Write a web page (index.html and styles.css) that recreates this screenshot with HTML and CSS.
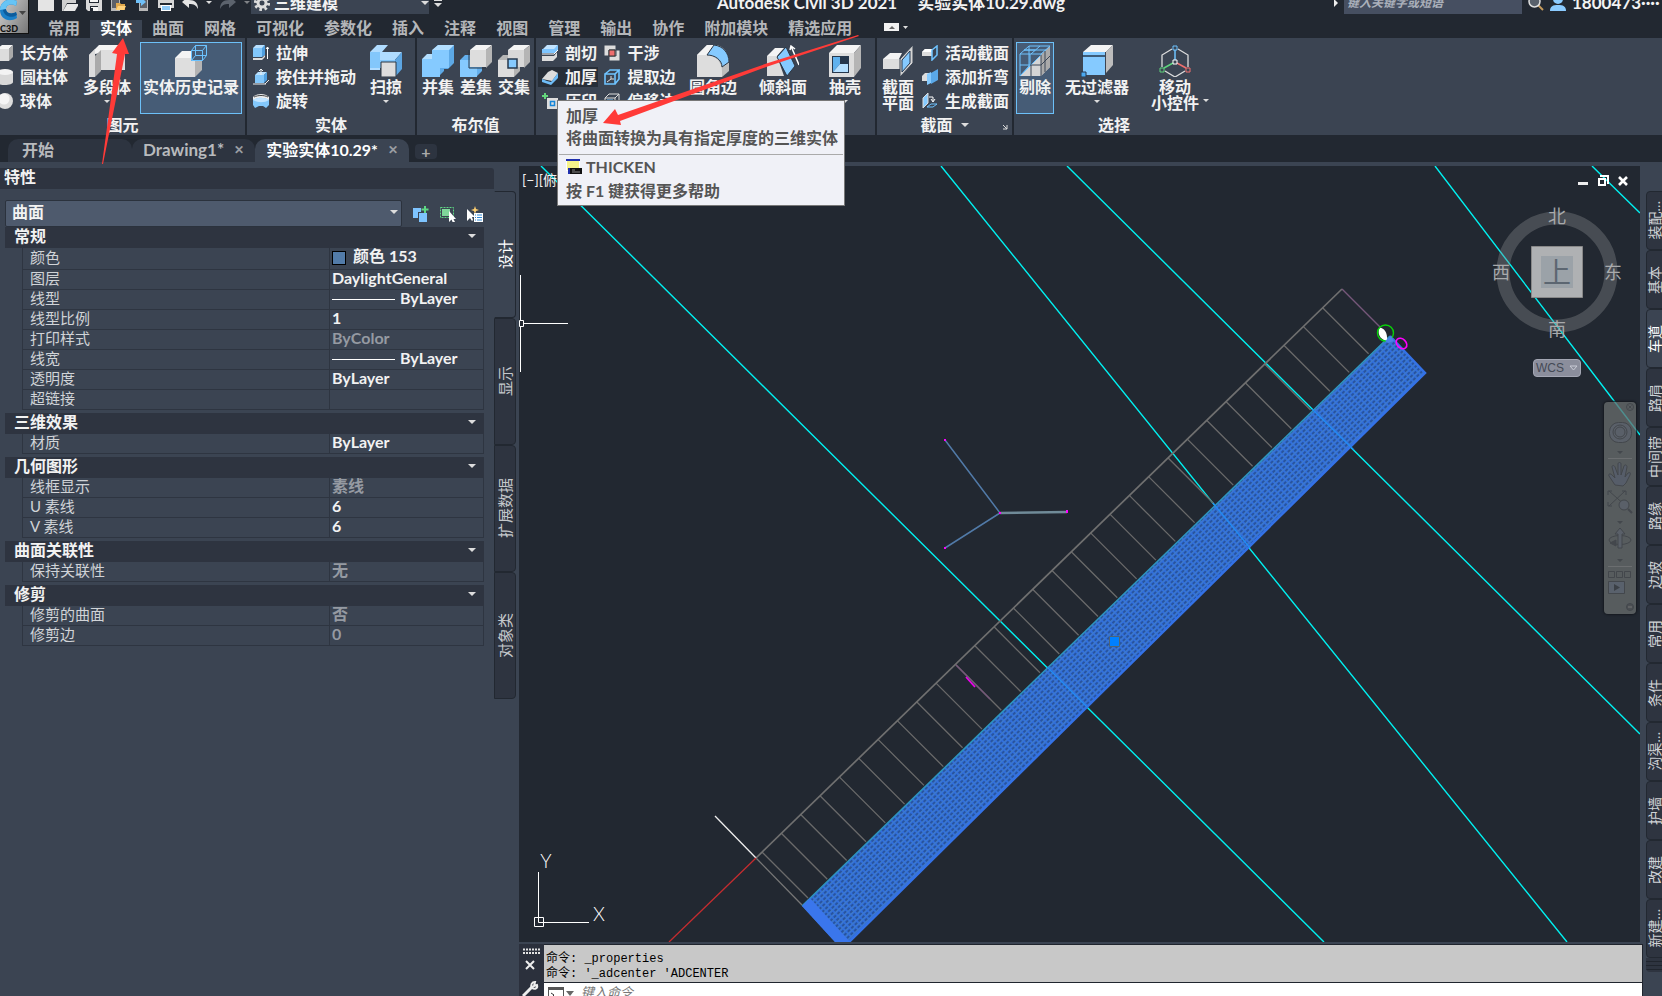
FILE: index.html
```html
<!DOCTYPE html>
<html lang="zh-CN">
<head>
<meta charset="utf-8">
<title>Autodesk Civil 3D 2021 - 实验实体10.29.dwg</title>
<link rel="stylesheet" href="styles.css">
</head>
<body>
<div class="app">
<header class="titlebar">
  <div class="quick">
    <button aria-label="新建"><svg width="16" height="16" viewBox="0 0 16 16"><path d="M0 0h10v5h6v11H0z" fill="#e4e4e4"/><path d="M11 0l5 4h-5z" fill="#aaa"/></svg></button>
    <button aria-label="打开"><svg width="16" height="16" viewBox="0 0 16 16"><path d="M0 16V3h6l2 2h6v3H5L1 16z" fill="#cfcfcf"/><path d="M5 9h12l-4 7H1z" fill="#e8e8e8"/></svg></button>
    <button aria-label="保存"><svg width="16" height="16" viewBox="0 0 16 16"><path d="M0 0h16v16H2L0 14z" fill="#d9d9d9"/><path d="M3 3h10v5H3zM4 11h8v5H4z" fill="#222831"/><path d="M4 3h8v4H4zM5 12h7v4H7v-3H5z" fill="#f5f5f5"/></svg></button>
    <button aria-label="从移动设备打开"><svg width="16" height="16" viewBox="0 0 16 16"><path d="M1 0h9v16H1z" fill="#b8b8b8"/><path d="M2 2h7v11H2z" fill="#5c6068"/><path d="M6 8h4l1 1h4v6H6z" fill="#e0a84c"/><path d="M8 11h8l-2 4H6z" fill="#ffd27a"/></svg></button>
    <button aria-label="保存到移动设备"><svg width="16" height="16" viewBox="0 0 16 16"><path d="M5 0h9v16H5z" fill="#b8b8b8"/><path d="M6 2h7v11H6z" fill="#5c6068"/><path d="M2 5h5V2l5 5-5 4V8H2z" fill="#6fc0f8"/></svg></button>
    <button aria-label="打印"><svg width="16" height="16" viewBox="0 0 16 16"><path d="M3 0h10v5H3z" fill="#fff"/><path d="M0 5h16v8H0z" fill="#d6d6d6"/><path d="M2 8h12v2H2z" fill="#222831"/><path d="M3 10h10v6H3z" fill="#fff"/><path d="M4 11h8v4H4z" fill="#8fcaf8"/></svg></button>
    <button aria-label="放弃"><svg width="16" height="16" viewBox="0 0 16 16"><path d="M7 1v4c6 0 9 3 9 9-2-4-4-5-9-5v4L0 7z" fill="#e4e4e4"/></svg></button>
    <i class="caret"></i>
    <button aria-label="重做"><svg width="16" height="16" viewBox="0 0 16 16"><path d="M9 1v4C3 5 0 8 0 14c2-4 4-5 9-5v4l7-6z" fill="#5c636d"/></svg></button>
    <i class="caret dim"></i>
  </div>
  <button class="workspace"><svg width="16" height="16" viewBox="0 0 16 16"><circle cx="8" cy="8" r="6.6" fill="none" stroke="#ddd" stroke-width="3" stroke-dasharray="2.6 2.58"/><circle cx="8" cy="8" r="4" fill="none" stroke="#ddd" stroke-width="3"/></svg><span>三维建模</span><i class="caret"></i></button>
  <button class="customize" aria-label="自定义"><i class="bar"></i><i class="caret"></i></button>
  <h1><span>Autodesk Civil 3D 2021</span><span>实验实体10.29.dwg</span></h1>
  <div class="account">
    <i class="play"></i>
    <input type="text" aria-label="搜索" placeholder="键入关键字或短语">
    <button aria-label="搜索"><svg width="16" height="16" viewBox="0 0 16 16"><path d="M10 10l5 5" stroke="#c59a5c" stroke-width="2"/><circle cx="6.500" cy="6.500" r="5.500" fill="#59616c" stroke="#e0e0e0" stroke-width="1.500"/></svg></button>
    <button aria-label="用户"><svg width="16" height="16" viewBox="0 0 16 16"><circle cx="8" cy="4" r="5" fill="#8bcbff"/><path d="M0 16c0-5 3-6 8-6s8 1 8 6z" fill="#8bcbff"/></svg></button>
    <span>1800473····</span>
  </div>
</header>
<button class="appbtn" aria-label="应用程序菜单"><svg width="29" height="26" viewBox="0 0 29 26"><path d="M17 1C8-3 0 2 0 10c0 9 9 13 17 8l-1-6c-5 3-10 1-10-3s5-6 10-3z" fill="#1a7fc8"/><path d="M17 1C8-3 0 2 0 10l6-1c0-4 5-6 10-3z" fill="#67c4f5"/><path d="M6 9c0 4 5 6 10 3l1 3c-6 4-13 1-14-5z" fill="#0c5c9c"/><path d="M19 11h7l-3.500 4z" fill="#444"/></svg><b>C3D</b></button>

<nav class="tabs">
  <button>常用</button><button class="on">实体</button><button>曲面</button><button>网格</button><button>可视化</button><button>参数化</button><button>插入</button><button>注释</button><button>视图</button><button>管理</button><button>输出</button><button>协作</button><button>附加模块</button><button>精选应用</button>
  <button class="mini" aria-label="最小化功能区"><svg width="26" height="9" viewBox="0 0 26 9"><path d="M0 0h15v8H0z" fill="#f2f2f2"/><path d="M5 6l3-3 3 3z" fill="#666"/><path d="M19 3h5l-2.500 3z" fill="#ddd"/></svg></button>
</nav>

<section class="ribbon">
  <div class="panel p-prim">
    <div class="body">
      <div class="col">
        <button><svg width="16" height="16" viewBox="0 0 16 16"><path d="M0 4l5-4h11l-4 4z" fill="#f5f5f5"/><path d="M0 4h12v12H0z" fill="#ddd"/><path d="M12 4l4-4v12l-4 4z" fill="#aaa"/></svg>长方体</button>
        <button><svg width="16" height="16" viewBox="0 0 16 16"><path d="M0 3v10c0 4 16 4 16 0V3z" fill="#d8d8d8"/><ellipse cx="8" cy="3" rx="8" ry="3" fill="#f3f3f3"/></svg>圆柱体</button>
        <button><svg width="16" height="16" viewBox="0 0 16 16"><circle cx="8" cy="8" r="8" fill="#ddd"/><circle cx="7" cy="6" r="5.500" fill="#f5f5f5"/></svg>球体</button>
      </div>
      <button class="big w60"><svg width="36" height="32" viewBox="0 0 36 32"><path d="M0 10L10 0h26v12L22 12v-4h-10z" fill="#f4f4f4"/><path d="M0 10l6-6v28H0z" fill="#dcdcdc"/><path d="M6 32V11l6-6v21z" fill="#aaa"/><path d="M12 5h24v20H12z" fill="#dedede"/></svg><span>多段体</span><i class="caret"></i></button>
      <button class="big sel w102"><svg width="32" height="32" viewBox="0 0 32 32"><path d="M0 13l7-7h20l-7 7z" fill="#f4f4f4"/><path d="M0 13h20v19H0z" fill="#dedede"/><path d="M20 13l7-7v19l-7 7z" fill="#b4b4b4"/><path d="M16 5h12v11H16z" fill="#465c76"/><path d="M16 5l4-5h12v11l-4 5" fill="#465c76"/><path d="M16.500 5.500h11v10h-11zM16.500 5.500l4-5h11l-4 5M31.500.500v10l-4 5M20.500.500v10h11M20.500 10.500l-4 5" fill="none" stroke="#6cc3ff"/></svg><span>实体历史记录</span></button>
    </div>
    <h2>图元</h2>
  </div>
  <div class="panel p-solid">
    <div class="body">
      <div class="col">
        <button><svg width="16" height="16" viewBox="0 0 16 16"><path d="M0 3l3-3h9l-2 3z" fill="#b8e0ff"/><path d="M0 3h9v9H0z" fill="#82c7fb"/><path d="M9 3l3-3v10l-3 2z" fill="#4f9fe0"/><path d="M0 13h9v2H0zM9 13l3-3v2l-3 3z" fill="#ddd"/><path d="M14.500 14V2M13 4l1.500-2L16 4" fill="none" stroke="#fff"/></svg>拉伸</button>
        <button><svg width="16" height="16" viewBox="0 0 16 16"><path d="M2 6l3-3h9l-3 3z" fill="#b8e0ff"/><path d="M2 6h9v8H2z" fill="#82c7fb"/><path d="M11 6l3-3v8l-3 3z" fill="#4f9fe0"/><path d="M8 6V0M6 2l2-2 2 2M0 15h13M12 15l4-4" fill="none" stroke="#eee"/></svg>按住并拖动</button>
        <button><svg width="16" height="16" viewBox="0 0 16 16"><path d="M0 4c4-4 12-4 16 0v3H0z" fill="#eee"/><path d="M1 4c4-2 10-2 14 0" stroke="#444" fill="none"/><path d="M0 7c5-3 11-3 16 0v5l-3 3-3-2H6l-4 2-2-3z" fill="#82c7fb"/><path d="M0 7c5-3 11-3 16 0-5 3-11 3-16 0z" fill="#c2e4ff"/></svg>旋转</button>
      </div>
      <button class="big w60"><svg width="32" height="32" viewBox="0 0 32 32"><path d="M0 7l7-7h11l-6 7h20l-8 9H10v9H0z" fill="#b0dcff"/><path d="M0 7h10v8h15v8H0z" fill="#83c7fb"/><path d="M25 15l7-8v17l-7 8z" fill="#5da6e2"/><path d="M11 17h15v15H11z" fill="#ddd" stroke="#2b3644"/></svg><span>扫掠</span><i class="caret"></i></button>
    </div>
    <h2>实体</h2>
  </div>
  <div class="panel p-bool">
    <div class="body">
      <button class="big w38"><svg width="32" height="32" viewBox="0 0 32 32"><path d="M0 15l6-6h5V5l5-5h16v18l-6 6h-4v2l-6 6H0z" fill="#5da9e6"/><path d="M0 14h10V5h17v18H18v9H0z" fill="#85caff"/><path d="M10 5l6-5h16l-5 5zM0 14l5-5h5v5z" fill="#b4dfff"/></svg><span>并集</span></button>
      <button class="big w38"><svg width="32" height="32" viewBox="0 0 32 32"><path d="M0 15l5-5h6v12h11v4l-6 6H0z" fill="#64b0ee"/><path d="M0 15h10v8h7v9H0z" fill="#85caff"/><path d="M10 5l6-5h16l-6 5z" fill="#f4f4f4"/><path d="M26 5l6-5v17l-6 6z" fill="#b5b5b5"/><path d="M10 5h16v17H10z" fill="#ddd"/><path d="M9 5v18h17" stroke="#2b3644" fill="none"/></svg><span>差集</span></button>
      <button class="big w38"><svg width="32" height="32" viewBox="0 0 32 32"><path d="M0 15l5-5h17v16l-6 6H0z" fill="#b5b5b5"/><path d="M0 15h16v17H0z" fill="#ddd"/><path d="M10 5l6-5h16l-6 5z" fill="#f4f4f4"/><path d="M26 5l6-5v17l-6 6z" fill="#b5b5b5"/><path d="M10 5h16v17H10z" fill="#d8d8d8"/><path d="M10 14h9v9h-9z" fill="#85caff" stroke="#26384d" stroke-width="1.500"/></svg><span>交集</span></button>
    </div>
    <h2>布尔值</h2>
  </div>
  <div class="panel p-edit">
    <div class="body">
      <div class="col">
        <button><svg width="16" height="16" viewBox="0 0 16 16"><path d="M1 4l4-4h11l-3 4z" fill="#c2e4ff"/><path d="M0 4h12l4-4v5l-3 3H0z" fill="#7fc6ff"/><path d="M0 9h12l4-4" stroke="#fff" fill="none"/><path d="M0 11h12l3-4v5l-4 4H0z" fill="#ddd"/></svg>剖切</button>
        <button class="hot"><svg width="16" height="16" viewBox="0 0 16 16"><path d="M0 10L6 3l4-2 6 3-6 8-5-1z" fill="#ddd"/><path d="M0 10l5 2 4 1 7-9v5l-7 7-9-3z" fill="#6fbdf8"/></svg>加厚</button>
        <button><svg width="16" height="16" viewBox="0 0 16 16"><path d="M3 0v6M0 3h6" stroke="#63d67c" stroke-width="2"/><path d="M5 5h11v11H5z" fill="#ddd"/><path d="M8.500 8.500h4v4h-4z" fill="none" stroke="#1686d9" stroke-width="1.500"/></svg>压印</button>
      </div>
      <div class="col">
        <button><svg width="16" height="16" viewBox="0 0 16 16"><path d="M0 0h12v11H0zM5 5h11v11H5z" fill="#ddd" stroke="#3b4452"/><path d="M5 5h6v6H5z" fill="#ee6e6e" stroke="#333"/></svg>干涉</button>
        <button><svg width="16" height="16" viewBox="0 0 16 16"><path d="M1 5h10v10H1zM1 5l5-4h9l-4 4M15 1v9l-4 5" fill="none" stroke="#6fc3ff" stroke-width="1.600"/><path d="M3 13l4-3V7M7 10h3" stroke="#ddd" fill="none"/></svg>提取边</button>
        <button><svg width="16" height="16" viewBox="0 0 16 16"><path d="M1 5h10v10H1zM1 5l4-4h10l-4 4M15 1v10l-4 4" fill="none" stroke="#ddd"/><path d="M3 7h6v6H3z" fill="none" stroke="#6fc3ff"/></svg>偏移边</button>
      </div>
      <button class="big w60 g"><svg width="32" height="32" viewBox="0 0 32 32"><path d="M0 10L10 0h8c8 0 14 8 14 17v9l-7 6H0z" fill="#bdbdbd"/><path d="M0 10L10 0h8l-8 10z" fill="#f4f4f4"/><path d="M0 32V10h10c9 0 15 8 15 16v6z" fill="#ddd"/><path d="M10 10l7-10c9 1 15 8 15 17l-7 5c0-7-7-12-15-12z" fill="#85caff" stroke="#2b3644"/></svg><span>圆角边</span><i class="caret"></i></button>
      <button class="big w60"><svg width="32" height="32" viewBox="0 0 32 32"><path d="M0 11l8-8h9l-7 8z" fill="#f4f4f4"/><path d="M0 11h10l7 20H0z" fill="#ddd"/><path d="M10 12l9-10 9 19-8 10z" fill="#85caff" stroke="#2b3644"/><path d="M32 20L24 1M23 5l1-4 4 3" stroke="#fff" fill="none" stroke-width="1.500"/></svg><span>倾斜面</span><i class="caret"></i></button>
      <button class="big w60"><svg width="32" height="32" viewBox="0 0 32 32"><path d="M0 8l8-8h24l-7 8z" fill="#f4f4f4"/><path d="M25 8l7-8v23l-7 9z" fill="#b5b5b5"/><path d="M0 8h25v24H0z" fill="#ddd"/><path d="M3 11h17v17H3z" fill="#26374c"/><path d="M4 12h7v7l-7 8z" fill="#5fb1ee"/><path d="M4 27l7-8h8v8z" fill="#b4dfff"/></svg><span>抽壳</span><i class="caret"></i></button>
    </div>
    <h2>实体编辑</h2>
  </div>
  <div class="panel p-sect">
    <div class="body">
      <button class="big w38"><svg width="32" height="32" viewBox="0 0 32 32"><path d="M1 14l7-6h12l-3 6z" fill="#f4f4f4"/><path d="M1 14h17v10H1z" fill="#ddd"/><path d="M18 14L31 0v18L18 32z" fill="#d4d4d4" stroke="#3b4452"/><path d="M20 15l8-9v12l-8 9z" fill="#85caff" stroke="#26374c"/></svg><span>截面<br>平面</span></button>
      <div class="col">
        <button><svg width="16" height="16" viewBox="0 0 16 16"><path d="M0 7l3-3h8v7H0z" fill="#ddd"/><path d="M0 7l3-3h8l-2 3z" fill="#fff"/><path d="M10 5l5-4v9l-5 5z" fill="#3b4452" stroke="#6fc3ff" stroke-width="1.500"/></svg>活动截面</button>
        <button><svg width="16" height="16" viewBox="0 0 16 16"><path d="M0 7l3-3h4v8H0z" fill="#ddd"/><path d="M5 5l4-2v11l-4 2z" fill="#85caff"/><path d="M9 4l7-4v11l-7 4z" fill="#5aa8e8"/></svg>添加折弯</button>
        <button><svg width="16" height="16" viewBox="0 0 16 16"><path d="M1 5l5-5v10l-5 5z" fill="#85caff" stroke="#ddd"/><path d="M7 4h4v4M9 6l2 3 2-3" fill="none" stroke="#fff"/><path d="M5 14l4-3h6l-4 3z" fill="none" stroke="#6fc3ff"/></svg>生成截面</button>
      </div>
    </div>
    <h2>截面<i class="caret"></i><button class="launch" aria-label="截面设置"><svg width="6" height="6" viewBox="0 0 6 6"><path d="M1 1l4 4M5 1v4H1" fill="none" stroke="#ddd"/></svg></button></h2>
  </div>
  <div class="panel p-pick">
    <div class="body">
      <button class="big sel w38"><svg width="32" height="32" viewBox="0 0 32 32"><path d="M1 31L22 10 31 1v21l-9 9z" fill="#d5d5d5"/><path d="M22 10l9-9v21l-9 9z" fill="#aaa"/><path d="M1 9h21v1L1 31zM1 9l9-8h21l-9 8M11 9v12M1 20h11M16 5L5 5M21 1l-9 8M10 1v20M10 21l-9 10M5 5h22" fill="none" stroke="#6fc3ff"/><path d="M12 20v11M11 20h11l9-9M22 10v21M26 6v21" fill="none" stroke="#3a4656"/></svg><span>剔除</span></button>
      <button class="big w70"><svg width="32" height="32" viewBox="0 0 32 32"><path d="M2 7l8-7h22l-7 7z" fill="#f4f4f4"/><path d="M25 7l7-7v20l-7 8z" fill="#bdbdbd"/><path d="M2 7h22v23H2z" fill="#85caff"/><path d="M1 11h23" stroke="#26374c" stroke-width="1.500"/><path d="M0 27h5v5H0z" fill="#4ba8ee" stroke="#26374c"/></svg><span>无过滤器</span><i class="caret"></i></button>
      <button class="big w70"><svg width="32" height="32" viewBox="0 0 32 32"><path d="M13 4L3 10v12M6 26l10 6 10-6M29 22V10L19 4" fill="none" stroke="#ddd" stroke-width="1.300"/><path d="M16 5v10" stroke="#6fc3ff" stroke-width="1.500"/><path d="M14 18l-9 5" stroke="#5fd37d" stroke-width="1.500"/><path d="M18 18l9 5" stroke="#ef6f6f" stroke-width="1.500"/><path d="M14 1h4v4h-4z" fill="none" stroke="#6fc3ff"/><path d="M14 15h4v4h-4z" fill="none" stroke="#fff"/><path d="M1 23h4v4H1z" fill="none" stroke="#5fd37d"/><path d="M27 23h4v4h-4z" fill="none" stroke="#ef6f6f"/></svg><span>移动<br>小控件</span><i class="caret side"></i></button>
    </div>
    <h2>选择</h2>
  </div>
</section>

<nav class="docs">
  <a href="#start" class="start">开始</a>
  <a href="#d1">Drawing1*<b>✕</b></a>
  <a href="#d2" class="on">实验实体10.29*<b>✕</b></a>
  <button aria-label="新图形">+</button>
</nav>

<main class="work">
  <aside class="props">
    <div class="sheet">
      <h3>特性</h3>
      <div class="picker">
        <button class="combo">曲面<i class="caret"></i></button>
        <button aria-label="切换 PICKADD"><svg width="16" height="16" viewBox="0 0 16 16"><path d="M0 2h8v4H5v6H0zM6 7h8v9H6z" fill="#7ec4ff"/><path d="M12 0v7M8.500 3.500h7" stroke="#5fd884" stroke-width="2"/></svg></button>
        <button aria-label="选择对象"><svg width="16" height="16" viewBox="0 0 16 16"><path d="M.5 1.500h13v10H.5z" fill="none" stroke="#5fd884" stroke-dasharray="2 1"/><path d="M2 3h8v7H2z" fill="#7fd79a"/><path d="M9 5v11l2.500-2.500L13 17l2-1-1.500-3H16z" fill="#fff"/></svg></button>
        <button aria-label="快速选择"><svg width="16" height="16" viewBox="0 0 16 16"><path d="M8 0l1 3 3 1-3 1-1 3-1-3-3-1 3-1z" fill="#ffcf70"/><path d="M0 3v12l3-3 2 3 1-1-1-3h3z" fill="#fff"/><path d="M7 7h9v9H7z" fill="#fff"/><path d="M8 9h1M8 11.500h1M8 14h1M10 9h5M10 11.500h5M10 14h5" stroke="#2f8ad8"/></svg></button>
      </div>
      <button class="cat">常规<i class="caret"></i></button>
      <table>
        <tr><th>颜色</th><td><i class="swatch"></i>颜色 153</td></tr>
        <tr><th>图层</th><td>DaylightGeneral</td></tr>
        <tr><th>线型</th><td><i class="rule"></i>ByLayer</td></tr>
        <tr><th>线型比例</th><td>1</td></tr>
        <tr><th>打印样式</th><td class="off">ByColor</td></tr>
        <tr><th>线宽</th><td><i class="rule"></i>ByLayer</td></tr>
        <tr><th>透明度</th><td>ByLayer</td></tr>
        <tr><th>超链接</th><td></td></tr>
      </table>
      <button class="cat">三维效果<i class="caret"></i></button>
      <table><tr><th>材质</th><td>ByLayer</td></tr></table>
      <button class="cat">几何图形<i class="caret"></i></button>
      <table>
        <tr><th>线框显示</th><td class="off">素线</td></tr>
        <tr><th>U 素线</th><td>6</td></tr>
        <tr><th>V 素线</th><td>6</td></tr>
      </table>
      <button class="cat">曲面关联性<i class="caret"></i></button>
      <table><tr><th>保持关联性</th><td class="off">无</td></tr></table>
      <button class="cat">修剪<i class="caret"></i></button>
      <table>
        <tr><th>修剪的曲面</th><td class="off">否</td></tr>
        <tr><th>修剪边</th><td class="off">0</td></tr>
      </table>
    </div>
    <div class="vtabs">
      <button class="on"><span>设计</span></button><button><span>显示</span></button><button><span>扩展数据</span></button><button><span>对象类</span></button>
    </div>
  </aside>

  <section class="center">
    <div class="canvas">
      <svg class="model" viewBox="519 166 1121 776" preserveAspectRatio="xMidYMid slice">
        <defs>
          <pattern id="mesh" width="5" height="4" patternUnits="userSpaceOnUse" patternTransform="rotate(-44.300)">
            <path d="M0 0h5v4H0z" fill="#316fdc"/><path d="M0 0h5v1H0z" fill="#417cc8"/><path d="M1 2h3v2H1z" fill="#28549f"/>
          </pattern>
        </defs>
        <g stroke="#00f0f0" stroke-width="1.400">
          <path d="M541 166L1324 942M941 166L1567 942M1067 166L1640 734M1435 166L1640 435M1592 166L1640 213"/>
        </g>
        <path id="rungs" stroke="#6a6a6a" stroke-width="1.300"/>
        <path d="M756 858L1342 289" stroke="#707070" stroke-width="1.700"/>
        <path d="M756 858l46 47" stroke="#777" stroke-width="1.300"/>
        <path d="M1342 289l38 38M956 665l34 34" stroke="#76577a" stroke-width="1.400"/>
        <path d="M802 906L1390 336 1425 373 849 942H835z" fill="url(#mesh)"/>
        <path d="M802 906L1390 336" stroke="#2e95bd" stroke-width="1.500"/>
        <path d="M1390 336L1425 373 849 942" stroke="#3472e6" stroke-width="2.500" fill="none"/>
        <path d="M802 906l8-8 40 44h-15z" fill="#3a76ec"/>
        <path d="M1047 667l40 40M1213 503l37 45M1312 409l42 41" stroke="#218cf4" stroke-width="1.200"/>
        <path d="M1379 328c4-1 9 4 8 13-5-1-10-5-8-13z" fill="#fff"/>
        <circle cx="1385.500" cy="333" r="8" fill="none" stroke="#08d408" stroke-width="1.400"/>
        <path d="M1385 341l6-5 3 5-6 2z" fill="#4b82e8"/>
        <ellipse cx="1401.500" cy="343.500" rx="6" ry="4.500" transform="rotate(45 1401.500 343.500)" fill="none" stroke="#f0f" stroke-width="1.600"/>
        <path d="M1109.500 636.500h10v10h-10z" fill="#0080ff" stroke="#4f6475"/>
        <path d="M945 440l55 73-55 35" fill="none" stroke="#517aa8" stroke-width="1.500"/>
        <path d="M1000 513l67-1" stroke="#708b98" stroke-width="2.400"/>
        <path d="M944 439h2v2h-2zM944 547h2v2h-2zM999 512h2v2h-2zM1066 510h2v3h-2z" fill="#f0f"/>
        <path d="M966 677l9 10" stroke="#e0e" stroke-width="1.700"/>
        <path d="M715 816l41 42" stroke="#eee" stroke-width="1.300"/>
        <path d="M756 858l-87 84" stroke="#c42c2f" stroke-width="1.300"/>
        <path d="M538.500 872v50.500H589M534.500 917.500h9v9h-9zM520.500 275v97M524 323.500h44" fill="none" stroke="#fff"/>
        <path d="M519.500 320.500h4v6h-4z" fill="#222831" stroke="#fff"/>
        <text x="546" y="868" class="axis">Y</text><text x="599" y="921" class="axis">X</text>
        <circle cx="1557" cy="272" r="54" fill="none" stroke="#8a8c90" stroke-opacity=".36" stroke-width="13"/>
        <path d="M1531.500 246.500h51v51h-51z" fill="#afb1b3" stroke="#888"/>
        <path d="M1541 256h32v32h-32z" fill="#9ba2a8"/>
        <text x="1557" y="283" class="top">上</text>
        <g class="dir"><text x="1557" y="223">北</text><text x="1501" y="279">西</text><text x="1613" y="279">东</text><text x="1557" y="336">南</text></g>
      </svg>
      <div class="viewlabel">[−][俯视]</div>
      <div class="winctl">
        <button aria-label="最小化"><svg width="12" height="12" viewBox="0 0 12 12"><path d="M1 7h10v3H1z" fill="#eee"/></svg></button>
        <button aria-label="还原"><svg width="12" height="12" viewBox="0 0 12 12"><path d="M4 2V1h7v7h-1M2 4h6v6H2z" fill="none" stroke="#fff" stroke-width="2"/></svg></button>
        <button aria-label="关闭"><svg width="12" height="12" viewBox="0 0 12 12"><path d="M2 2l8 8M10 2l-8 8" stroke="#fff" stroke-width="2.600"/></svg></button>
      </div>
      <button class="wcs">WCS<svg width="9" height="6" viewBox="0 0 9 6"><path d="M1 1h7L4.500 5z" fill="none" stroke="#c9cbd6"/></svg></button>
      <div class="navbar">
        <svg width="32" height="212" viewBox="0 0 32 212" fill="none" stroke="#43474c">
          <circle cx="26" cy="5" r="3.500"/><path d="M24.500 3.500l3 3M27.500 3.500l-3 3"/>
          <rect x="5.500" y="20.500" width="22" height="20" rx="9" fill="#5a6069"/><circle cx="16" cy="30" r="7"/><circle cx="16" cy="30" r="5"/>
          <path d="M13 49h6l-3 3zM13 119h6l-3 3zM13 157h6l-3 3z" fill="#43474c" stroke="none"/>
          <path d="M4 56.500h24M4 164.500h24" stroke="#6b6e70"/>
          <path d="M11 83l-6-9c-1-2 1-3 3-1l3 3-3-11c0-2 2-2 3 0l3 8V62c0-2 3-2 3 0v11l3-9c1-2 3-1 3 1l-2 10 3-4c2-1 3 0 2 2l-4 8-3 3z" fill="#565d69"/>
          <path d="M5 89l17 15M21 89L5 104M4 93v-4h4M18 89h4v4M4 100v4h4"/><circle cx="20" cy="103" r="5" fill="#5a6069"/><path d="M24 107l4 4" stroke-width="2"/>
          <ellipse cx="16" cy="138" rx="11" ry="4.500"/><path d="M14 146v-14h-3l5-6 5 6h-3v14z" fill="#5a6069"/><path d="M6 141l6-3v6z" fill="#43474c"/>
          <path d="M4.500 169.500h6v6h-6zM12.500 169.500h6v6h-6zM20.500 169.500h6v6h-6z"/><path d="M4.500 179.500h16v12h-16z" fill="#59616c"/><path d="M10 182v7l6-3.500z" fill="#3b4046" stroke="none"/>
          <circle cx="26" cy="205" r="3.500" fill="#4b4f53"/><path d="M24 205h4" stroke="#777"/>
        </svg>
      </div>
    </div>
    <div class="command">
      <div class="grip"><svg width="18" height="52" viewBox="0 0 18 52"><path d="M1 4.500h17M1 8h17" stroke="#e4e4e4" stroke-width="2" stroke-dasharray="2 1"/><path d="M4 16l8 8M12 16l-8 8" stroke="#eee" stroke-width="2"/><path d="M1 51L11 41" stroke="#eee" stroke-width="3"/><path d="M13 37c-3 0-5 3-3 6 3 2 6 0 5-3l-3 1z" stroke="#eee" stroke-width="2" fill="none"/></svg></div>
      <div class="console">
        <pre>命令: _properties
命令: '_adcenter 'ADCENTER</pre>
        <label class="entry"><svg width="27" height="14" viewBox="0 0 27 14"><path d="M.5.500h15v13H.5z" fill="#fff" stroke="#555"/><path d="M0 0h16v3H0z" fill="#555"/><path d="M3 6l3 2-3 3M7 12h4" fill="none" stroke="#333"/><path d="M18 4h8l-4 5z" fill="#666"/></svg><input type="text" aria-label="命令" placeholder="键入命令"></label>
      </div>
    </div>
  </section>

  <aside class="tools">
    <button><span>装配…</span></button><button><span>基本</span></button><button class="on"><span>车道</span></button><button><span>路肩</span></button><button><span>中间带</span></button><button><span>路缘</span></button><button><span>边坡</span></button><button><span>常用</span></button><button><span>条件</span></button><button><span>沟渠…</span></button><button><span>护墙</span></button><button><span>改建</span></button><button><span>新建…</span></button>
    <i class="stack"></i>
  </aside>
</main>
</div>

<div class="tooltip" role="tooltip">
  <p>加厚</p><p>将曲面转换为具有指定厚度的三维实体</p>
  <div class="more"><p><svg width="16" height="16" viewBox="0 0 16 16"><path d="M0 0h14v12H0z" fill="#fff"/><path d="M1 2h12v9H1z" fill="#f5f28a"/><path d="M0 0h14v2H0z" fill="#1f2fae"/><path d="M2 9h14v6H2z" fill="#111"/><path d="M2 9h2v6H2z" fill="#1f2fae"/><path d="M6 11h3M6 13h8" stroke="#888"/></svg>THICKEN</p><p>按 F1 键获得更多帮助</p></div>
</div>
<svg class="arrows" width="870" height="170" viewBox="0 0 870 170"><path d="M123 38l6 16-4 0-22 110h-1l15-110-5-1zM603 123l12-14 3 6 150-52 90-28 1 1-90 30L620 121l1 4z" fill="#ff3b38"/></svg>
<script src="model.js"></script>
</body>
</html>
```
FILE: model.js
```js
// Rungs between the centre line and the edge of the selected surface.
const parts = [];
for (let i = 0; i < 30; i++) {
  const x = 762 + i * 19.33;
  const y = 852 - i * 18.77;
  parts.push(`M${x.toFixed(1)} ${y.toFixed(1)}l46 46`);
}
document.getElementById('rungs').setAttribute('d', parts.join(''));
```
FILE: styles.css
```css
* { box-sizing: border-box; margin: 0; padding: 0; }
html, body { height: 100%; overflow: hidden; }
body {
  font: 700 16px/16px Lato, "Noto Sans CJK SC", sans-serif;
  color: #f2f2f2;
  background: #3b4452;
}
button, input { font: inherit; color: inherit; background: none; border: 0; }
button { white-space: nowrap; }
a { color: inherit; text-decoration: none; }
svg { display: block; flex: none; }
.caret { flex: none; border: 4px solid transparent; border-top-color: #ddd; border-bottom: 0; }
.app { height: 100vh; display: flex; flex-direction: column; }

/* title bar */
.titlebar { flex: none; height: 23px; margin-top: -9px; padding-left: 38px; display: flex; align-items: center; background: #222831; }
.quick { display: flex; align-items: center; gap: 8px; width: 213px; flex: none; }
.quick .caret { border-width: 3px; border-bottom: 0; }
.dim { opacity: .5; }
.workspace { display: flex; align-items: center; gap: 4px; width: 178px; height: 23px; padding: 0 0 0 3px; background: #3b4452; }
.workspace .caret { margin-left: auto; }
.customize { padding: 0 5px; }
.customize .bar { display: block; width: 8px; height: 2px; margin-bottom: 2px; background: #ddd; }
.customize .caret { display: block; }
h1 { flex: 1; display: flex; gap: 20px; padding-left: 270px; font: inherit; font-size: 17px; white-space: nowrap; }
.account { display: flex; align-items: center; flex: none; gap: 6px; width: 328px; height: 23px; overflow: hidden; white-space: nowrap; }
.account input { width: 178px; height: 23px; padding-left: 3px; background: #464f61; flex: none; font-size: 12px; font-style: italic; }
.account input::placeholder { color: #aab0ba; opacity: 1; }
.account span { font-size: 17px; }
.play { border: 4px solid transparent; border-left-color: #eee; border-right: 0; }
.appbtn { position: absolute; left: 0; top: 0; width: 29px; height: 34px; background: linear-gradient(120deg, #d0d0d0, #777); border: solid #111; border-width: 0 1px 1px 0; overflow: hidden; }
.appbtn b { display: block; margin-top: -2px; font-size: 9px; line-height: 9px; color: #111; text-align: left; }

/* ribbon tabs */
.tabs { flex: none; height: 24px; padding: 6px 0 0 38px; display: flex; background: #222831; color: #b4b6b9; }
.tabs button { height: 18px; padding: 0 10px 3px; line-height: 15px; }
.tabs .on { background: #3b4452; color: #fff; }
.tabs .mini { padding-left: 22px; }

/* ribbon */
.ribbon { flex: none; height: 97px; display: flex; overflow: hidden; }
.panel { flex: none; display: flex; flex-direction: column; border-right: 2px solid #222831; }
.panel .body { flex: 1; display: flex; padding-top: 4px; }
.panel h2 { height: 18px; font: inherit; text-align: center; display: flex; justify-content: center; align-items: flex-start; gap: 8px; position: relative; }
.panel h2 .caret { margin-top: 6px; }
.launch { position: absolute; right: 4px; top: 7px; }
.p-prim { width: 247px; }
.p-solid { width: 170px; }
.p-bool { width: 119px; }
.p-edit { width: 341px; }
.p-sect { width: 137px; }
.p-pick { width: 200px; border: 0; }
.col { display: flex; flex-direction: column; gap: 4px; padding-top: 1px; }
.col button { height: 20px; display: flex; align-items: center; gap: 7px; }
.big { height: 72px; border: 1px solid transparent; padding-top: 2px; display: flex; flex-direction: column; align-items: center; flex: none; }
.big span { margin: 2px 0 5px; }
.big .caret { border-width: 3px; border-bottom: 0; }
.w60 { width: 60px; }
.w38 { width: 38px; }
.w70 { width: 70px; }
.w102 { width: 102px; }
.sel { background: #465c76; border-color: #6cc0f8; }
.p-prim .body { gap: 3px; }
.p-prim .col { width: 77px; margin-left: -3px; }
.p-solid .body { padding-left: 6px; gap: 3px; }
.p-bool .body { padding-left: 2px; }
.p-solid .col { width: 100px; }
.p-edit .body { padding-left: 2px; gap: 2px; }
.p-edit .col { width: 63px; }
.p-edit .col button { padding-left: 4px; gap: 7px; }
.p-edit .col + .col { width: 84px; }
.p-edit .g { margin-right: 8px; }
.hot { background: #272e38; }
.p-sect .body { padding-left: 2px; gap: 5px; }
.p-pick .body { padding-left: 2px; gap: 8px; }
.p-pick .side { align-self: flex-end; margin-top: -17px; }

/* drawing tabs */
.docs { flex: none; height: 31px; padding: 4px 0 0 8px; display: flex; align-items: stretch; background: #222831; border-bottom: 4px solid #3b4452; color: #b8babd; }
.docs a { display: flex; align-items: center; gap: 10px; padding: 0 11px 2px; background: #2d3440; border-radius: 10px 10px 0 0; font-size: 17px; }
.docs .start { width: 124px; padding-left: 14px; font-size: 16px; }
.docs .on { background: #3b4452; color: #fff; font-size: 16px; }
.docs b { font-size: 12px; color: #9a9da2; }
.docs button { width: 22px; margin: 5px 0 3px 6px; background: #2d3440; border-radius: 4px; color: #aaa; }

.work { flex: 1; min-height: 0; display: flex; }

/* properties */
.props { flex: none; width: 519px; padding-top: 2px; display: flex; background: #3b4452; }
.sheet { width: 494px; display: flex; flex-direction: column; }
.sheet h3 { height: 21px; padding-left: 4px; font: inherit; line-height: 18px; background: #2e3440; border-radius: 0 3px 0 0; }
.picker { display: flex; gap: 11px; align-items: center; margin: 11px 0 0 5px; height: 27px; }
.combo { width: 397px; height: 27px; padding: 0 3px 3px 6px; display: flex; align-items: center; justify-content: space-between; background: #4e5a6d; border: 1px solid #2b323d; border-radius: 2px; }
.cat { width: 479px; height: 21px; margin: 3px 0 0 5px; padding: 0 8px 3px 9px; display: flex; align-items: center; justify-content: space-between; background: #2e3440; }
.picker + .cat { margin-top: 0; }
table { width: 462px; margin-left: 22px; border-collapse: separate; border-spacing: 0; table-layout: fixed; border: solid #2e3541; border-width: 0 1px 0 1px; }
tr { height: 20px; }
th, td { height: 20px; line-height: 15px; text-align: left; border-bottom: 1px solid #2e3541; white-space: nowrap; vertical-align: middle; overflow: hidden; }
th { width: 306px; padding: 0 0 2px 7px; font-weight: 400; font-size: 15px; color: #d0d3d7; }
td { padding: 0 0 4px 2px; border-left: 1px solid #2e3541; }
td.off { color: #959aa2; }
.swatch { display: inline-block; width: 14px; height: 14px; margin-right: 7px; vertical-align: -3px; background: #527ba8; border: 1px solid #000; }
.rule { display: inline-block; width: 63px; height: 1px; margin: 0 5px 4px 0; vertical-align: 0; background: #fff; }
.vtabs { width: 22px; padding-top: 23px; }
.vtabs button { display: flex; align-items: center; justify-content: center; width: 22px; height: 127px; background: #2e3440; border: 1px solid #222831; border-radius: 0 4px 4px 0; font-weight: 400; font-size: 15px; color: #c4c7cb; }
.vtabs .on { background: #3b4452; border-left-color: #3b4452; color: #fff; }
.vtabs span, .tools span { writing-mode: vertical-rl; text-orientation: sideways; transform: rotate(180deg); }

/* drawing area */
.center { flex: 1; min-width: 0; display: flex; flex-direction: column; }
.canvas { flex: 1; min-height: 0; position: relative; background: #222831; overflow: hidden; }
.model { width: 100%; height: 100%; }
.axis { font: 300 19px Lato, sans-serif; fill: #fff; text-anchor: middle; }
.top { font: 400 28px "Noto Sans CJK SC", sans-serif; fill: #5c6671; text-anchor: middle; }
.dir { font: 400 18px "Noto Sans CJK SC", sans-serif; fill: #a8aaac; text-anchor: middle; }
.viewlabel { position: absolute; left: 3px; top: 6px; font-weight: 400; font-size: 14px; }
.winctl { position: absolute; top: 9px; right: 11px; display: flex; gap: 8px; }
.wcs { position: absolute; top: 193px; right: 59px; width: 48px; height: 18px; display: flex; align-items: center; justify-content: center; gap: 5px; background: #8b8e9c; border: 1px solid #a4a7b4; border-radius: 4px; font: 400 12px "Liberation Sans", sans-serif; color: #444955; }
.navbar { position: absolute; top: 236px; right: 4px; background: rgba(106, 109, 110, .75); border-radius: 4px; box-shadow: 0 0 2px 1px #15191f; }

/* command line */
.command { flex: none; height: 54px; display: flex; margin-right: -3px; padding-top: 2px; position: relative; background: #3b4452; }
.grip { width: 25px; padding: 1px 0 0 3px; background: #2b303c; overflow: hidden; }
.console { flex: 1; display: flex; flex-direction: column; overflow: hidden; border: solid #20252e; border-width: 1px 1px 0 0; background: #fff; }
pre { flex: none; height: 38px; padding: 7px 2px 0; font: 400 12px/15px "Liberation Mono", "Noto Sans CJK SC", monospace; color: #000; background: #c8c8c8; border-bottom: 1px solid #20252e; }
.entry { display: flex; align-items: flex-start; gap: 6px; padding: 4px 0 0 4px; }
.entry input { flex: 1; height: 16px; margin-top: -3px; font-weight: 400; font-size: 13px; font-style: italic; color: #333; }
.entry input::placeholder { color: #777; opacity: 1; }

/* palette tabs on the right */
.tools { flex: none; width: 22px; padding: 25px 0 0 6px; overflow: hidden; }
.tools button { display: flex; align-items: center; justify-content: flex-start; width: 24px; height: 59px; padding-left: 1px; background: #2e3440; border: 1px solid #222831; border-radius: 4px 0 0 4px; font-weight: 400; font-size: 14px; color: #d0d2d6; }
.tools span { line-height: 14px; margin: auto 0; }
.tools .on { background: #3b4452; color: #fff; }
.stack { display: block; width: 24px; height: 14px; border-radius: 0 0 0 4px; background: repeating-linear-gradient(#2e3440 0 3px, #20252e 3px 4px); }

/* overlays */
.tooltip { position: absolute; left: 557px; top: 100px; width: 288px; height: 106px; padding: 7px 1px 0; background: #f0f1f7; border: 1px solid #777; color: #555; white-space: nowrap; }
.tooltip p { padding-left: 7px; margin-bottom: 6px; display: flex; gap: 4px; }
.tooltip .more { margin-top: 8px; padding-top: 4px; border-top: 1px solid #aaa; }
.tooltip .more p { margin-bottom: 8px; }
.arrows { position: absolute; left: 0; top: 0; pointer-events: none; }
```
